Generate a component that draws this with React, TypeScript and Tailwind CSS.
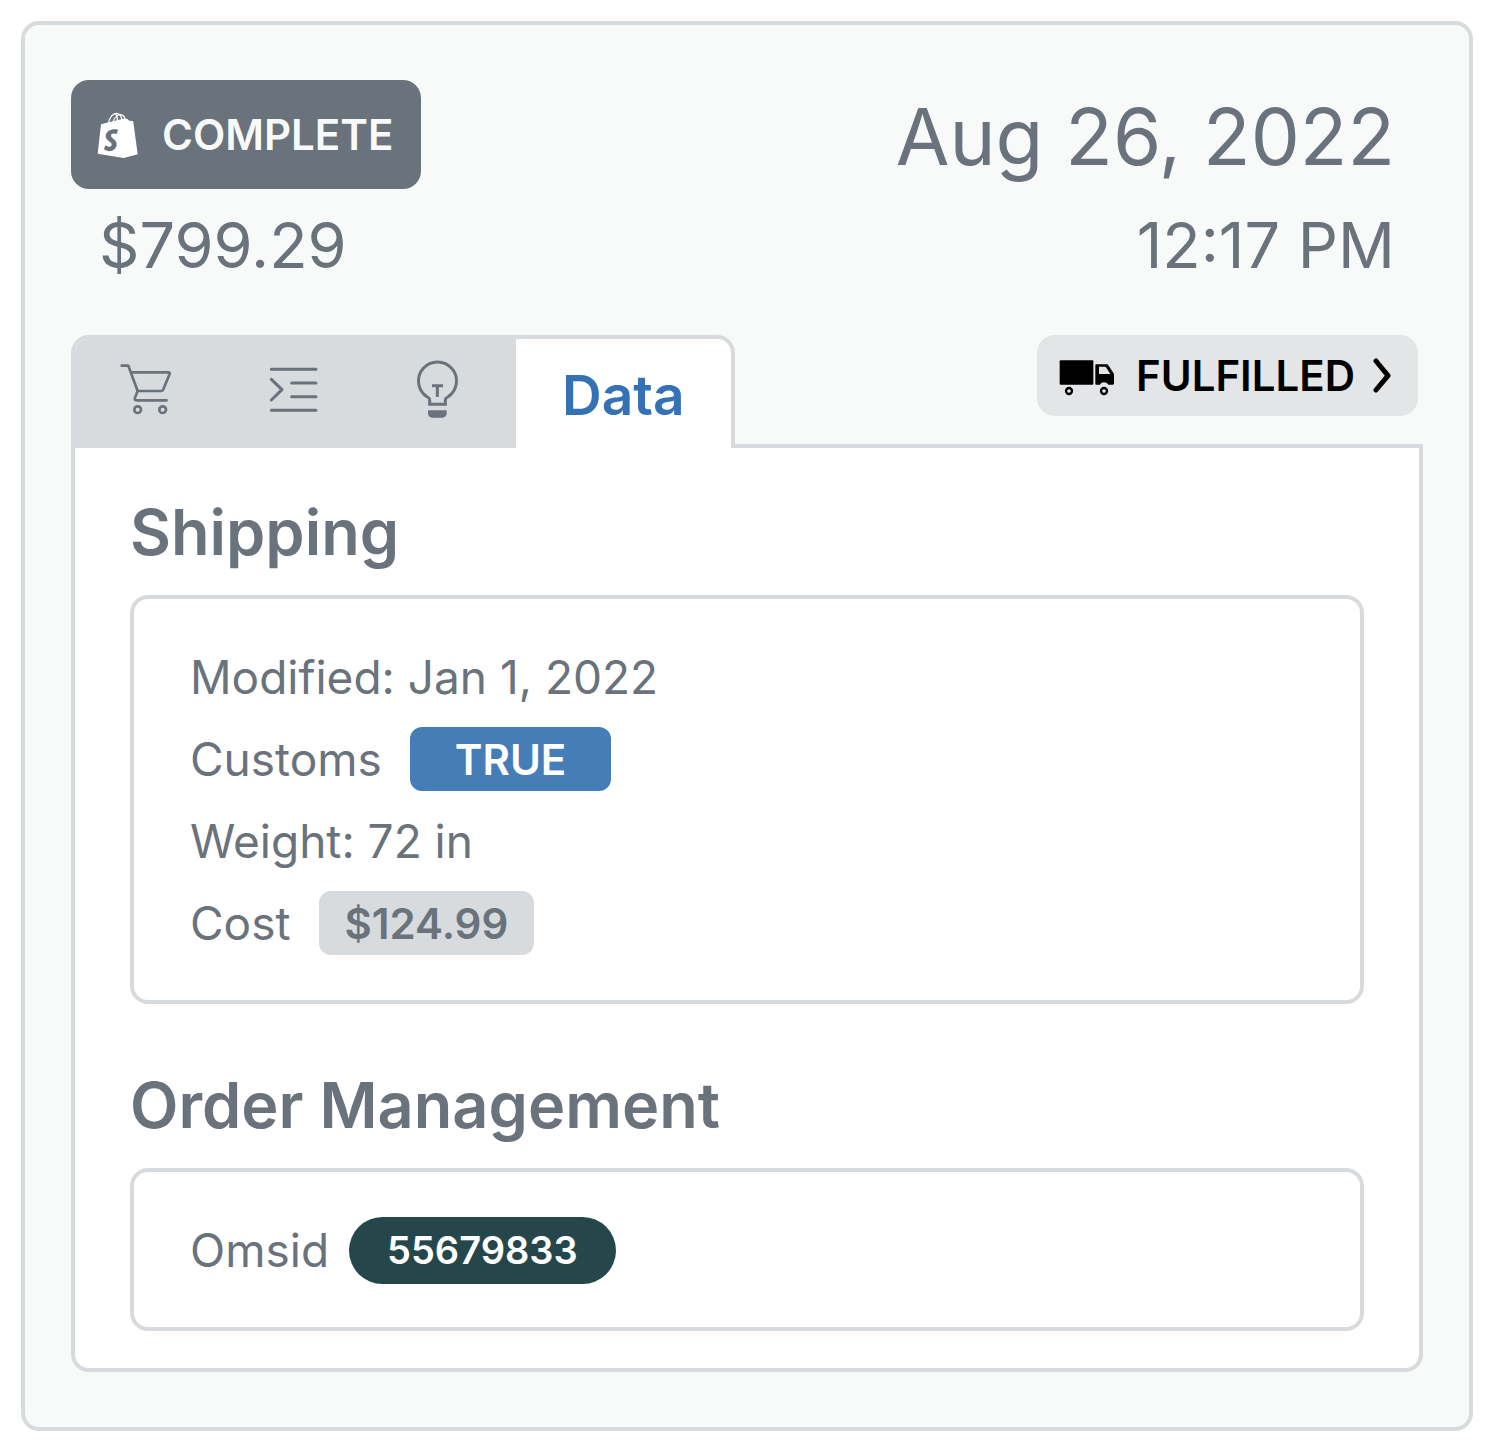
import type { ReactNode } from "react";

const stroke = {
  fill: "none",
  stroke: "currentColor",
  strokeWidth: 8,
  strokeLinecap: "round" as const,
  strokeLinejoin: "round" as const,
};

function ShoppingBagLogo() {
  return (
    <svg viewBox="0 0 138 156" className="h-[52px] w-[46px] shrink-0 text-white" aria-hidden="true">
      <path
        fill="currentColor"
        fillRule="evenodd"
        d="M18 46L84 29L96 29L103 35L112 36C114 36 115 37 115 39L128 136L86 147L8 134ZM69 62C51 58 32 66 32 82C32 95 50 98 50 107C50 115 38 114 31 109L27 121C41 132 65 126 65 105C65 91 48 88 48 80C48 73 58 72 65 75Z"
      />
      <path
        fill="none"
        stroke="currentColor"
        strokeWidth="4"
        d="M40 44C43 25 54 13 64 13C74 13 79 21 81 33M53 42C57 27 67 17 77 17C86 18 89 25 90 32M67 38C68 29 66 19 61 14"
      />
    </svg>
  );
}

function CartIcon() {
  return (
    <svg viewBox="30 33 168 168" className="size-14 overflow-visible" aria-hidden="true" {...stroke}>
      <path d="M35 47h20l28 76h71c3 0 4-1 5-3l20-48c1-3 0-5-3-5H62" />
      <path d="M83 123l-8 20c-2 5 0 8 4 8h91" />
      <circle cx="83" cy="179" r="10" />
      <circle cx="158" cy="179" r="10" />
    </svg>
  );
}

function IndentIcon() {
  return (
    <svg viewBox="18 33 168 168" className="size-14 overflow-visible" aria-hidden="true" {...stroke} strokeWidth={9}>
      <path d="M34 58h134M95 99h73M95 140h73M34 181h134M34 88l32 31-32 31" />
    </svg>
  );
}

function BulbIcon() {
  return (
    <svg viewBox="36 31 168 168" className="size-14 overflow-visible" aria-hidden="true" {...stroke} strokeLinecap="butt" strokeLinejoin="miter">
      <path d="M89 161V147c0-4-3-6-7-8A57 57 0 1 1 143 139c-4 2-7 4-7 8v14z" strokeWidth="9" />
      <path d="M96 105h33M112 105v34" strokeWidth="9" />
      <path d="M84 179h56v9c0 8-5 13-13 13H97c-8 0-13-5-13-13z" fill="currentColor" stroke="none" />
    </svg>
  );
}

function TruckIcon() {
  return (
    <svg viewBox="30 26 165 105" className="h-[35px] w-[55px] overflow-visible" aria-hidden="true" fill="currentColor">
      <rect x="32" y="33" width="101" height="73" rx="3" />
      <path
        fillRule="evenodd"
        d="M142 45h30c3 0 5 1 7 4l14 21c1 2 2 4 2 6v26c0 3-1 4-4 4h-13c-2-4-7-7-13-7s-10 3-12 7h-11c-2 0-3-1-3-3V48c0-2 1-3 3-3zM150 52v22h34l-13-20c-1-1-2-2-4-2z"
      />
      <circle cx="60" cy="125" r="9" fill="none" stroke="currentColor" strokeWidth="7" />
      <circle cx="165" cy="125" r="9" fill="none" stroke="currentColor" strokeWidth="7" />
    </svg>
  );
}

function ChevronIcon() {
  return (
    <svg viewBox="1060 100 54 105" className="h-[35px] w-[18px]" aria-hidden="true" {...stroke} strokeWidth={15}>
      <path d="M1069 109l36 44-36 43" />
    </svg>
  );
}

function IconTab({ label, children }: { label: string; children: ReactNode }) {
  return (
    <button type="button" role="tab" aria-selected="false" aria-label={label} className="flex px-[45px] pt-[22px]">
      {children}
    </button>
  );
}

function Section({ title, children }: { title: string; children: ReactNode }) {
  return (
    <section>
      <h2 className="mb-8 text-[63px] leading-[62px] font-semibold">{title}</h2>
      <div className="rounded-[18px] border-4 border-[#d8dbde] px-14 pt-[37px] pb-9 text-[46px]">{children}</div>
    </section>
  );
}

function Row({ children }: { children: ReactNode }) {
  return <div className="flex h-[82px] items-center">{children}</div>;
}

export default function App() {
  return (
    <main className="bg-white p-[21px] font-['Inter',sans-serif] text-[#6a727c]">
      <article className="rounded-[18px] border-4 border-[#d8dbde] bg-[#f8faf9] px-[46px] pt-[55px] pb-[55px]">
        <header className="flex justify-between">
          <div>
            <div className="flex h-[109px] items-center rounded-[18px] bg-[#6a727c] pr-7 pl-6 text-[#f8faf9]">
              <ShoppingBagLogo />
              <span className="ml-[21px] text-[42px] font-semibold">COMPLETE</span>
            </div>
            <p className="mt-6 ml-7 text-[63px] leading-[64px]">$799.29</p>
          </div>
          <div className="mr-7 text-right">
            <p className="flex h-[109px] items-center justify-end pt-1 text-[78px]">Aug 26, 2022</p>
            <p className="mt-6 text-[63px] leading-[64px]">12:17 PM</p>
          </div>
        </header>

        <div className="mt-[58px] flex items-start justify-between">
          <div
            role="tablist"
            aria-label="Order details"
            className="relative z-10 -mb-1 flex h-[113px] overflow-hidden rounded-t-[18px] border-4 border-b-0 border-[#d8dbde] bg-white"
          >
            <div className="flex items-start bg-[#d8dbde] pr-[3px]">
              <IconTab label="Cart">
                <CartIcon />
              </IconTab>
              <IconTab label="Line items">
                <IndentIcon />
              </IconTab>
              <IconTab label="Insights">
                <BulbIcon />
              </IconTab>
            </div>
            <button
              type="button"
              role="tab"
              aria-selected="true"
              className="px-[46px] pt-1 text-[55px] font-semibold text-[#3572b5]"
            >
              Data
            </button>
          </div>
          <button
            type="button"
            className="mr-[5px] flex h-[81px] items-center rounded-[18px] bg-[#e4e5e7] pr-[27px] pl-[22px] text-[42px] font-semibold text-black"
          >
            <TruckIcon />
            <span className="mr-[18px] ml-[22px]">FULFILLED</span>
            <ChevronIcon />
          </button>
        </div>

        <div
          role="tabpanel"
          className="flex flex-col gap-[70px] rounded-b-[18px] border-4 border-[#d8dbde] bg-white px-[55px] pt-[53px] pb-[37px]"
        >
          <Section title="Shipping">
            <Row>Modified: Jan 1, 2022</Row>
            <Row>
              Customs
              <span className="ml-7 flex h-16 items-center rounded-xl bg-[#457db7] px-[45px] text-[42px] font-semibold text-white">
                TRUE
              </span>
            </Row>
            <Row>Weight: 72 in</Row>
            <Row>
              Cost
              <span className="ml-7 flex h-16 items-center rounded-xl bg-[#d8dbde] px-[26px] text-[42px] font-semibold">
                $124.99
              </span>
            </Row>
          </Section>
          <Section title="Order Management">
            <Row>
              Omsid
              <span className="ml-5 flex h-[67px] items-center rounded-full bg-[#25474b] px-[38px] text-[38px] font-semibold text-white">
                55679833
              </span>
            </Row>
          </Section>
        </div>
      </article>
    </main>
  );
}
